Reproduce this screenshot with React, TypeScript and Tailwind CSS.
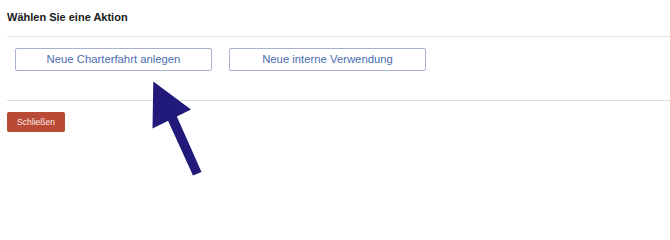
export default function App() {
  return (
    <div className="relative w-[670px] h-[204px] bg-white overflow-hidden font-['Liberation_Sans',Arial,sans-serif]">
      <div className="h-[36px] pl-[7px] pt-[12px] text-[11px] leading-[11px] font-bold text-[#1a1a1a]">
        Wählen Sie eine Aktion
      </div>
      <div className="ml-[7px] border-t border-[#e2e2e2]" />

      <div className="h-[63px] flex gap-[17px] pl-[15px] pt-[11px]">
        <button className="w-[197px] h-[23px] flex items-center justify-center rounded-[2px] border border-[#a7b2cc] bg-white text-[11.3px] text-[#4a6cb0]">
          Neue Charterfahrt anlegen
        </button>
        <button className="w-[197px] h-[23px] flex items-center justify-center rounded-[2px] border border-[#a7b2cc] bg-white text-[11.3px] text-[#4a6cb0]">
          Neue interne Verwendung
        </button>
      </div>
      <div className="ml-[7px] border-t border-[#dcdcdc]" />

      <div className="pl-[7px] pt-[11px]">
        <button className="w-[58px] h-[20px] flex items-center justify-center rounded-[2px] bg-[#b94a35] text-[8.5px] text-[#fbe9e4]">
          Schließen
        </button>
      </div>

      {/* annotation arrow over the screenshot */}
      <svg
        className="absolute inset-0 pointer-events-none"
        width="670"
        height="204"
        viewBox="0 0 670 204"
      >
        <polygon points="153.3,81.5 152.5,128.5 191,109.5" fill="#221a7a" />
        <polygon points="164.5,113 173.5,109 201.5,172 193,175.5" fill="#221a7a" />
      </svg>
    </div>
  );
}
